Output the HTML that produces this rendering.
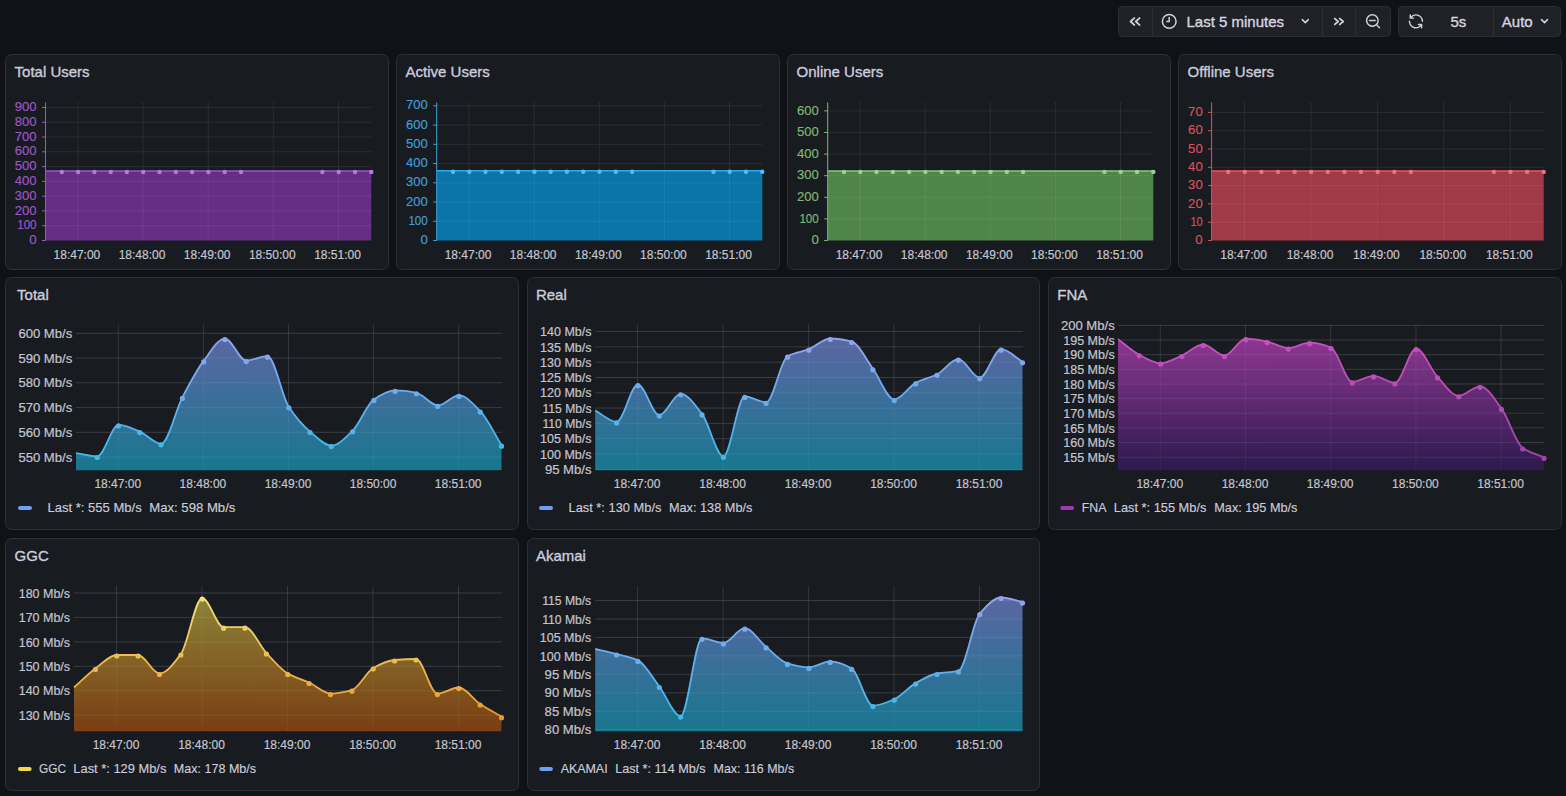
<!DOCTYPE html>
<html><head><meta charset="utf-8"><title>Dashboard</title>
<style>
html,body{margin:0;padding:0;background:#111217;width:1566px;height:796px;overflow:hidden;}
svg{display:block;font-family:"Liberation Sans", sans-serif;}
</style></head><body>
<svg width="1566" height="796" viewBox="0 0 1566 796">
<defs><linearGradient id="ltot" gradientUnits="userSpaceOnUse" x1="0" y1="339.6" x2="0" y2="457.5"><stop offset="0" stop-color="#8fa4f0"/><stop offset="1" stop-color="#40b8ea"/></linearGradient><linearGradient id="ftot" gradientUnits="userSpaceOnUse" x1="0" y1="339.6" x2="0" y2="470.2"><stop offset="0" stop-color="#5a67a2"/><stop offset="1" stop-color="#17778f"/></linearGradient><linearGradient id="lreal" gradientUnits="userSpaceOnUse" x1="0" y1="339.5" x2="0" y2="457.3"><stop offset="0" stop-color="#8fa4f0"/><stop offset="1" stop-color="#40b8ea"/></linearGradient><linearGradient id="freal" gradientUnits="userSpaceOnUse" x1="0" y1="339.5" x2="0" y2="470.2"><stop offset="0" stop-color="#5a67a2"/><stop offset="1" stop-color="#17778f"/></linearGradient><linearGradient id="lfna" gradientUnits="userSpaceOnUse" x1="0" y1="339.7" x2="0" y2="458.3"><stop offset="0" stop-color="#c652bc"/><stop offset="1" stop-color="#a244aa"/></linearGradient><linearGradient id="ffna" gradientUnits="userSpaceOnUse" x1="0" y1="339.7" x2="0" y2="470.2"><stop offset="0" stop-color="#8c3790"/><stop offset="1" stop-color="#2c1a4e"/></linearGradient><linearGradient id="lggc" gradientUnits="userSpaceOnUse" x1="0" y1="599.1" x2="0" y2="717.7"><stop offset="0" stop-color="#f2e27a"/><stop offset="1" stop-color="#e8982e"/></linearGradient><linearGradient id="fggc" gradientUnits="userSpaceOnUse" x1="0" y1="599.1" x2="0" y2="731.2"><stop offset="0" stop-color="#8c8238"/><stop offset="1" stop-color="#7a3e12"/></linearGradient><linearGradient id="lak" gradientUnits="userSpaceOnUse" x1="0" y1="598.5" x2="0" y2="717.1"><stop offset="0" stop-color="#8fa4f0"/><stop offset="1" stop-color="#40b8ea"/></linearGradient><linearGradient id="fak" gradientUnits="userSpaceOnUse" x1="0" y1="598.5" x2="0" y2="731.2"><stop offset="0" stop-color="#5a67a2"/><stop offset="1" stop-color="#17778f"/></linearGradient></defs>
<rect width="1566" height="796" fill="#111217"/>
<rect x="1118.5" y="6.5" width="272" height="30" rx="4" fill="#1f2126" stroke="#2c2e33"/><line x1="1152.5" y1="7" x2="1152.5" y2="36" stroke="#2c2e33"/><line x1="1322.5" y1="7" x2="1322.5" y2="36" stroke="#2c2e33"/><line x1="1355.5" y1="7" x2="1355.5" y2="36" stroke="#2c2e33"/><rect x="1398.5" y="6.5" width="162" height="30" rx="4" fill="#1f2126" stroke="#2c2e33"/><line x1="1493.5" y1="7" x2="1493.5" y2="36" stroke="#2c2e33"/><path d="M1134.3,18.1 l-3.7,3.4 l3.7,3.4 M1139.5,18.1 l-3.7,3.4 l3.7,3.4" fill="none" stroke="#d0d0dc" stroke-width="1.9" stroke-linecap="round" stroke-linejoin="round"/><path transform="translate(1160.1,12.3) scale(0.76)" fill="#d0d0dc" d="M12,2A10,10,0,1,0,22,12,10,10,0,0,0,12,2Zm0,18a8,8,0,1,1,8-8A8,8,0,0,1,12,20Zm0-14a1,1,0,0,0-1,1v4H9a1,1,0,0,0,0,2h3a1,1,0,0,0,1-1V7A1,1,0,0,0,12,6Z"/><text x="1186.5" y="27.4" font-size="15" fill="#d6d6e2" stroke="#d6d6e2" stroke-width="0.35">Last 5 minutes</text><path d="M1302.3,19.6 l3,3 l3,-3" fill="none" stroke="#d0d0dc" stroke-width="1.5" stroke-linecap="round" stroke-linejoin="round"/><path d="M1334.8,18.6 l3.4,2.9 l-3.4,2.9 M1339.8,18.6 l3.4,2.9 l-3.4,2.9" fill="none" stroke="#d0d0dc" stroke-width="1.9" stroke-linecap="round" stroke-linejoin="round"/><path transform="translate(1364.5,12.7) scale(0.715)" fill="#d0d0dc" d="M21.71,20.29,18,16.61A9,9,0,1,0,16.61,18l3.68,3.68a1,1,0,0,0,1.42,0A1,1,0,0,0,21.71,20.29ZM11,18a7,7,0,1,1,7-7A7,7,0,0,1,11,18Zm4-8H7a1,1,0,0,0,0,2h8a1,1,0,0,0,0-2Z"/><path transform="translate(1407.3,12.7) scale(0.72)" fill="#d0d0dc" d="M19.91,15.51H15.38a1,1,0,0,0,0,2h2.4A8,8,0,0,1,4,12a1,1,0,0,0-2,0,10,10,0,0,0,16.88,7.23V21a1,1,0,0,0,2,0V16.5A1,1,0,0,0,19.91,15.510ZM12,2A10,10,0,0,0,5.12,4.77V3a1,1,0,0,0-2,0V7.5a1,1,0,0,0,1,1h4.5a1,1,0,0,0,0-2H6.220A8,8,0,0,1,20,12a1,1,0,0,0,2,0A10,10,0,0,0,12,2Z"/><text x="1450.5" y="27.4" font-size="15" fill="#d6d6e2" stroke="#d6d6e2" stroke-width="0.35">5s</text><text x="1501.8" y="27.4" font-size="15" fill="#d6d6e2" stroke="#d6d6e2" stroke-width="0.35">Auto</text><path d="M1541.5,19.6 l3,3 l3,-3" fill="none" stroke="#d0d0dc" stroke-width="1.5" stroke-linecap="round" stroke-linejoin="round"/>
<rect x="5.5" y="54.5" width="383" height="215" rx="6" fill="#181b1f" stroke="#2c2f35"/>
<text x="14.6" y="76.9" font-size="15" fill="#ccccdc" stroke="#ccccdc" stroke-width="0.35">Total Users</text>
<line x1="42.0" y1="240.5" x2="45.5" y2="240.5" stroke="#9f55c9"/>
<text x="36.6" y="244.1" font-size="12" fill="#9f55c9" stroke="#9f55c9" stroke-width="0.15" text-anchor="end" textLength="7.4" lengthAdjust="spacingAndGlyphs">0</text>
<line x1="45.5" y1="225.7" x2="371.3" y2="225.7" stroke="#2a2d32"/>
<line x1="42.0" y1="225.7" x2="45.5" y2="225.7" stroke="#9f55c9"/>
<text x="36.6" y="229.3" font-size="12" fill="#9f55c9" stroke="#9f55c9" stroke-width="0.15" text-anchor="end" textLength="19.4" lengthAdjust="spacingAndGlyphs">100</text>
<line x1="45.5" y1="210.9" x2="371.3" y2="210.9" stroke="#2a2d32"/>
<line x1="42.0" y1="210.9" x2="45.5" y2="210.9" stroke="#9f55c9"/>
<text x="36.6" y="214.5" font-size="12" fill="#9f55c9" stroke="#9f55c9" stroke-width="0.15" text-anchor="end" textLength="21.8" lengthAdjust="spacingAndGlyphs">200</text>
<line x1="45.5" y1="196.2" x2="371.3" y2="196.2" stroke="#2a2d32"/>
<line x1="42.0" y1="196.2" x2="45.5" y2="196.2" stroke="#9f55c9"/>
<text x="36.6" y="199.8" font-size="12" fill="#9f55c9" stroke="#9f55c9" stroke-width="0.15" text-anchor="end" textLength="21.8" lengthAdjust="spacingAndGlyphs">300</text>
<line x1="45.5" y1="181.4" x2="371.3" y2="181.4" stroke="#2a2d32"/>
<line x1="42.0" y1="181.4" x2="45.5" y2="181.4" stroke="#9f55c9"/>
<text x="36.6" y="185.0" font-size="12" fill="#9f55c9" stroke="#9f55c9" stroke-width="0.15" text-anchor="end" textLength="21.8" lengthAdjust="spacingAndGlyphs">400</text>
<line x1="45.5" y1="166.6" x2="371.3" y2="166.6" stroke="#2a2d32"/>
<line x1="42.0" y1="166.6" x2="45.5" y2="166.6" stroke="#9f55c9"/>
<text x="36.6" y="170.2" font-size="12" fill="#9f55c9" stroke="#9f55c9" stroke-width="0.15" text-anchor="end" textLength="21.8" lengthAdjust="spacingAndGlyphs">500</text>
<line x1="45.5" y1="151.8" x2="371.3" y2="151.8" stroke="#2a2d32"/>
<line x1="42.0" y1="151.8" x2="45.5" y2="151.8" stroke="#9f55c9"/>
<text x="36.6" y="155.4" font-size="12" fill="#9f55c9" stroke="#9f55c9" stroke-width="0.15" text-anchor="end" textLength="21.8" lengthAdjust="spacingAndGlyphs">600</text>
<line x1="45.5" y1="137.0" x2="371.3" y2="137.0" stroke="#2a2d32"/>
<line x1="42.0" y1="137.0" x2="45.5" y2="137.0" stroke="#9f55c9"/>
<text x="36.6" y="140.6" font-size="12" fill="#9f55c9" stroke="#9f55c9" stroke-width="0.15" text-anchor="end" textLength="21.8" lengthAdjust="spacingAndGlyphs">700</text>
<line x1="45.5" y1="122.3" x2="371.3" y2="122.3" stroke="#2a2d32"/>
<line x1="42.0" y1="122.3" x2="45.5" y2="122.3" stroke="#9f55c9"/>
<text x="36.6" y="125.9" font-size="12" fill="#9f55c9" stroke="#9f55c9" stroke-width="0.15" text-anchor="end" textLength="21.8" lengthAdjust="spacingAndGlyphs">800</text>
<line x1="45.5" y1="107.5" x2="371.3" y2="107.5" stroke="#2a2d32"/>
<line x1="42.0" y1="107.5" x2="45.5" y2="107.5" stroke="#9f55c9"/>
<text x="36.6" y="111.1" font-size="12" fill="#9f55c9" stroke="#9f55c9" stroke-width="0.15" text-anchor="end" textLength="21.8" lengthAdjust="spacingAndGlyphs">900</text>
<line x1="77.9" y1="102" x2="77.9" y2="240.5" stroke="#2a2d32"/>
<line x1="143.0" y1="102" x2="143.0" y2="240.5" stroke="#2a2d32"/>
<line x1="208.2" y1="102" x2="208.2" y2="240.5" stroke="#2a2d32"/>
<line x1="273.3" y1="102" x2="273.3" y2="240.5" stroke="#2a2d32"/>
<line x1="338.5" y1="102" x2="338.5" y2="240.5" stroke="#2a2d32"/>
<rect x="45.5" y="171.0" width="325.8" height="69.5" fill="#672e86"/>
<line x1="45.5" y1="225.7" x2="371.3" y2="225.7" stroke="#ffffff" stroke-opacity="0.07"/>
<line x1="45.5" y1="210.9" x2="371.3" y2="210.9" stroke="#ffffff" stroke-opacity="0.07"/>
<line x1="45.5" y1="196.2" x2="371.3" y2="196.2" stroke="#ffffff" stroke-opacity="0.07"/>
<line x1="45.5" y1="181.4" x2="371.3" y2="181.4" stroke="#ffffff" stroke-opacity="0.07"/>
<line x1="77.9" y1="171.0" x2="77.9" y2="240.5" stroke="#ffffff" stroke-opacity="0.07"/>
<line x1="143.0" y1="171.0" x2="143.0" y2="240.5" stroke="#ffffff" stroke-opacity="0.07"/>
<line x1="208.2" y1="171.0" x2="208.2" y2="240.5" stroke="#ffffff" stroke-opacity="0.07"/>
<line x1="273.3" y1="171.0" x2="273.3" y2="240.5" stroke="#ffffff" stroke-opacity="0.07"/>
<line x1="338.5" y1="171.0" x2="338.5" y2="240.5" stroke="#ffffff" stroke-opacity="0.07"/>
<line x1="45.5" y1="171.0" x2="371.3" y2="171.0" stroke="#a055cc" stroke-width="1.5"/>
<line x1="45.5" y1="102.5" x2="45.5" y2="240.5" stroke="#9f55c9" stroke-width="1"/>
<circle cx="61.8" cy="172.0" r="2.2" fill="#b47ad9"/>
<circle cx="78.1" cy="172.0" r="2.2" fill="#b47ad9"/>
<circle cx="94.4" cy="172.0" r="2.2" fill="#b47ad9"/>
<circle cx="110.7" cy="172.0" r="2.2" fill="#b47ad9"/>
<circle cx="126.9" cy="172.0" r="2.2" fill="#b47ad9"/>
<circle cx="143.2" cy="172.0" r="2.2" fill="#b47ad9"/>
<circle cx="159.5" cy="172.0" r="2.2" fill="#b47ad9"/>
<circle cx="175.8" cy="172.0" r="2.2" fill="#b47ad9"/>
<circle cx="192.1" cy="172.0" r="2.2" fill="#b47ad9"/>
<circle cx="208.4" cy="172.0" r="2.2" fill="#b47ad9"/>
<circle cx="224.7" cy="172.0" r="2.2" fill="#b47ad9"/>
<circle cx="241.0" cy="172.0" r="2.2" fill="#b47ad9"/>
<circle cx="322.4" cy="172.0" r="2.2" fill="#b47ad9"/>
<circle cx="338.7" cy="172.0" r="2.2" fill="#b47ad9"/>
<circle cx="355.0" cy="172.0" r="2.2" fill="#b47ad9"/>
<circle cx="371.3" cy="172.0" r="2.2" fill="#b47ad9"/>
<text x="76.9" y="258.6" font-size="12" fill="#c4c4cf" stroke="#c4c4cf" stroke-width="0.2" text-anchor="middle">18:47:00</text>
<text x="142.0" y="258.6" font-size="12" fill="#c4c4cf" stroke="#c4c4cf" stroke-width="0.2" text-anchor="middle">18:48:00</text>
<text x="207.2" y="258.6" font-size="12" fill="#c4c4cf" stroke="#c4c4cf" stroke-width="0.2" text-anchor="middle">18:49:00</text>
<text x="272.3" y="258.6" font-size="12" fill="#c4c4cf" stroke="#c4c4cf" stroke-width="0.2" text-anchor="middle">18:50:00</text>
<text x="337.5" y="258.6" font-size="12" fill="#c4c4cf" stroke="#c4c4cf" stroke-width="0.2" text-anchor="middle">18:51:00</text>
<rect x="396.5" y="54.5" width="383" height="215" rx="6" fill="#181b1f" stroke="#2c2f35"/>
<text x="405.6" y="76.9" font-size="15" fill="#ccccdc" stroke="#ccccdc" stroke-width="0.35">Active Users</text>
<line x1="433.2" y1="240.5" x2="436.7" y2="240.5" stroke="#3f9fd8"/>
<text x="427.8" y="244.1" font-size="12" fill="#3f9fd8" stroke="#3f9fd8" stroke-width="0.15" text-anchor="end" textLength="7.4" lengthAdjust="spacingAndGlyphs">0</text>
<line x1="436.7" y1="221.3" x2="762.3" y2="221.3" stroke="#2a2d32"/>
<line x1="433.2" y1="221.3" x2="436.7" y2="221.3" stroke="#3f9fd8"/>
<text x="427.8" y="224.9" font-size="12" fill="#3f9fd8" stroke="#3f9fd8" stroke-width="0.15" text-anchor="end" textLength="19.4" lengthAdjust="spacingAndGlyphs">100</text>
<line x1="436.7" y1="202.0" x2="762.3" y2="202.0" stroke="#2a2d32"/>
<line x1="433.2" y1="202.0" x2="436.7" y2="202.0" stroke="#3f9fd8"/>
<text x="427.8" y="205.6" font-size="12" fill="#3f9fd8" stroke="#3f9fd8" stroke-width="0.15" text-anchor="end" textLength="21.8" lengthAdjust="spacingAndGlyphs">200</text>
<line x1="436.7" y1="182.8" x2="762.3" y2="182.8" stroke="#2a2d32"/>
<line x1="433.2" y1="182.8" x2="436.7" y2="182.8" stroke="#3f9fd8"/>
<text x="427.8" y="186.4" font-size="12" fill="#3f9fd8" stroke="#3f9fd8" stroke-width="0.15" text-anchor="end" textLength="21.8" lengthAdjust="spacingAndGlyphs">300</text>
<line x1="436.7" y1="163.5" x2="762.3" y2="163.5" stroke="#2a2d32"/>
<line x1="433.2" y1="163.5" x2="436.7" y2="163.5" stroke="#3f9fd8"/>
<text x="427.8" y="167.1" font-size="12" fill="#3f9fd8" stroke="#3f9fd8" stroke-width="0.15" text-anchor="end" textLength="21.8" lengthAdjust="spacingAndGlyphs">400</text>
<line x1="436.7" y1="144.3" x2="762.3" y2="144.3" stroke="#2a2d32"/>
<line x1="433.2" y1="144.3" x2="436.7" y2="144.3" stroke="#3f9fd8"/>
<text x="427.8" y="147.9" font-size="12" fill="#3f9fd8" stroke="#3f9fd8" stroke-width="0.15" text-anchor="end" textLength="21.8" lengthAdjust="spacingAndGlyphs">500</text>
<line x1="436.7" y1="125.1" x2="762.3" y2="125.1" stroke="#2a2d32"/>
<line x1="433.2" y1="125.1" x2="436.7" y2="125.1" stroke="#3f9fd8"/>
<text x="427.8" y="128.7" font-size="12" fill="#3f9fd8" stroke="#3f9fd8" stroke-width="0.15" text-anchor="end" textLength="21.8" lengthAdjust="spacingAndGlyphs">600</text>
<line x1="436.7" y1="105.8" x2="762.3" y2="105.8" stroke="#2a2d32"/>
<line x1="433.2" y1="105.8" x2="436.7" y2="105.8" stroke="#3f9fd8"/>
<text x="427.8" y="109.4" font-size="12" fill="#3f9fd8" stroke="#3f9fd8" stroke-width="0.15" text-anchor="end" textLength="21.8" lengthAdjust="spacingAndGlyphs">700</text>
<line x1="469.0" y1="102" x2="469.0" y2="240.5" stroke="#2a2d32"/>
<line x1="534.2" y1="102" x2="534.2" y2="240.5" stroke="#2a2d32"/>
<line x1="599.3" y1="102" x2="599.3" y2="240.5" stroke="#2a2d32"/>
<line x1="664.4" y1="102" x2="664.4" y2="240.5" stroke="#2a2d32"/>
<line x1="729.5" y1="102" x2="729.5" y2="240.5" stroke="#2a2d32"/>
<rect x="436.7" y="170.8" width="325.6" height="69.7" fill="#0b74a9"/>
<line x1="436.7" y1="221.3" x2="762.3" y2="221.3" stroke="#ffffff" stroke-opacity="0.07"/>
<line x1="436.7" y1="202.0" x2="762.3" y2="202.0" stroke="#ffffff" stroke-opacity="0.07"/>
<line x1="436.7" y1="182.8" x2="762.3" y2="182.8" stroke="#ffffff" stroke-opacity="0.07"/>
<line x1="469.0" y1="170.8" x2="469.0" y2="240.5" stroke="#ffffff" stroke-opacity="0.07"/>
<line x1="534.2" y1="170.8" x2="534.2" y2="240.5" stroke="#ffffff" stroke-opacity="0.07"/>
<line x1="599.3" y1="170.8" x2="599.3" y2="240.5" stroke="#ffffff" stroke-opacity="0.07"/>
<line x1="664.4" y1="170.8" x2="664.4" y2="240.5" stroke="#ffffff" stroke-opacity="0.07"/>
<line x1="729.5" y1="170.8" x2="729.5" y2="240.5" stroke="#ffffff" stroke-opacity="0.07"/>
<line x1="436.7" y1="170.8" x2="762.3" y2="170.8" stroke="#2eaaf0" stroke-width="1.5"/>
<line x1="436.7" y1="102.5" x2="436.7" y2="240.5" stroke="#3f9fd8" stroke-width="1"/>
<circle cx="453.0" cy="171.8" r="2.2" fill="#52bcf5"/>
<circle cx="469.3" cy="171.8" r="2.2" fill="#52bcf5"/>
<circle cx="485.5" cy="171.8" r="2.2" fill="#52bcf5"/>
<circle cx="501.8" cy="171.8" r="2.2" fill="#52bcf5"/>
<circle cx="518.1" cy="171.8" r="2.2" fill="#52bcf5"/>
<circle cx="534.4" cy="171.8" r="2.2" fill="#52bcf5"/>
<circle cx="550.7" cy="171.8" r="2.2" fill="#52bcf5"/>
<circle cx="566.9" cy="171.8" r="2.2" fill="#52bcf5"/>
<circle cx="583.2" cy="171.8" r="2.2" fill="#52bcf5"/>
<circle cx="599.5" cy="171.8" r="2.2" fill="#52bcf5"/>
<circle cx="615.8" cy="171.8" r="2.2" fill="#52bcf5"/>
<circle cx="632.1" cy="171.8" r="2.2" fill="#52bcf5"/>
<circle cx="713.5" cy="171.8" r="2.2" fill="#52bcf5"/>
<circle cx="729.7" cy="171.8" r="2.2" fill="#52bcf5"/>
<circle cx="746.0" cy="171.8" r="2.2" fill="#52bcf5"/>
<circle cx="762.3" cy="171.8" r="2.2" fill="#52bcf5"/>
<text x="468.0" y="258.6" font-size="12" fill="#c4c4cf" stroke="#c4c4cf" stroke-width="0.2" text-anchor="middle">18:47:00</text>
<text x="533.2" y="258.6" font-size="12" fill="#c4c4cf" stroke="#c4c4cf" stroke-width="0.2" text-anchor="middle">18:48:00</text>
<text x="598.3" y="258.6" font-size="12" fill="#c4c4cf" stroke="#c4c4cf" stroke-width="0.2" text-anchor="middle">18:49:00</text>
<text x="663.4" y="258.6" font-size="12" fill="#c4c4cf" stroke="#c4c4cf" stroke-width="0.2" text-anchor="middle">18:50:00</text>
<text x="728.5" y="258.6" font-size="12" fill="#c4c4cf" stroke="#c4c4cf" stroke-width="0.2" text-anchor="middle">18:51:00</text>
<rect x="787.5" y="54.5" width="383" height="215" rx="6" fill="#181b1f" stroke="#2c2f35"/>
<text x="796.6" y="76.9" font-size="15" fill="#ccccdc" stroke="#ccccdc" stroke-width="0.35">Online Users</text>
<line x1="824.2" y1="240.5" x2="827.7" y2="240.5" stroke="#80b874"/>
<text x="818.8000000000001" y="244.1" font-size="12" fill="#80b874" stroke="#80b874" stroke-width="0.15" text-anchor="end" textLength="7.4" lengthAdjust="spacingAndGlyphs">0</text>
<line x1="827.7" y1="218.9" x2="1153.3" y2="218.9" stroke="#2a2d32"/>
<line x1="824.2" y1="218.9" x2="827.7" y2="218.9" stroke="#80b874"/>
<text x="818.8000000000001" y="222.5" font-size="12" fill="#80b874" stroke="#80b874" stroke-width="0.15" text-anchor="end" textLength="19.4" lengthAdjust="spacingAndGlyphs">100</text>
<line x1="827.7" y1="197.3" x2="1153.3" y2="197.3" stroke="#2a2d32"/>
<line x1="824.2" y1="197.3" x2="827.7" y2="197.3" stroke="#80b874"/>
<text x="818.8000000000001" y="200.9" font-size="12" fill="#80b874" stroke="#80b874" stroke-width="0.15" text-anchor="end" textLength="21.8" lengthAdjust="spacingAndGlyphs">200</text>
<line x1="827.7" y1="175.7" x2="1153.3" y2="175.7" stroke="#2a2d32"/>
<line x1="824.2" y1="175.7" x2="827.7" y2="175.7" stroke="#80b874"/>
<text x="818.8000000000001" y="179.3" font-size="12" fill="#80b874" stroke="#80b874" stroke-width="0.15" text-anchor="end" textLength="21.8" lengthAdjust="spacingAndGlyphs">300</text>
<line x1="827.7" y1="154.1" x2="1153.3" y2="154.1" stroke="#2a2d32"/>
<line x1="824.2" y1="154.1" x2="827.7" y2="154.1" stroke="#80b874"/>
<text x="818.8000000000001" y="157.7" font-size="12" fill="#80b874" stroke="#80b874" stroke-width="0.15" text-anchor="end" textLength="21.8" lengthAdjust="spacingAndGlyphs">400</text>
<line x1="827.7" y1="132.5" x2="1153.3" y2="132.5" stroke="#2a2d32"/>
<line x1="824.2" y1="132.5" x2="827.7" y2="132.5" stroke="#80b874"/>
<text x="818.8000000000001" y="136.1" font-size="12" fill="#80b874" stroke="#80b874" stroke-width="0.15" text-anchor="end" textLength="21.8" lengthAdjust="spacingAndGlyphs">500</text>
<line x1="827.7" y1="110.9" x2="1153.3" y2="110.9" stroke="#2a2d32"/>
<line x1="824.2" y1="110.9" x2="827.7" y2="110.9" stroke="#80b874"/>
<text x="818.8000000000001" y="114.5" font-size="12" fill="#80b874" stroke="#80b874" stroke-width="0.15" text-anchor="end" textLength="21.8" lengthAdjust="spacingAndGlyphs">600</text>
<line x1="860.0" y1="102" x2="860.0" y2="240.5" stroke="#2a2d32"/>
<line x1="925.2" y1="102" x2="925.2" y2="240.5" stroke="#2a2d32"/>
<line x1="990.3" y1="102" x2="990.3" y2="240.5" stroke="#2a2d32"/>
<line x1="1055.4" y1="102" x2="1055.4" y2="240.5" stroke="#2a2d32"/>
<line x1="1120.5" y1="102" x2="1120.5" y2="240.5" stroke="#2a2d32"/>
<rect x="827.7" y="170.9" width="325.6" height="69.6" fill="#4f8549"/>
<line x1="827.7" y1="218.9" x2="1153.3" y2="218.9" stroke="#ffffff" stroke-opacity="0.07"/>
<line x1="827.7" y1="197.3" x2="1153.3" y2="197.3" stroke="#ffffff" stroke-opacity="0.07"/>
<line x1="827.7" y1="175.7" x2="1153.3" y2="175.7" stroke="#ffffff" stroke-opacity="0.07"/>
<line x1="860.0" y1="170.9" x2="860.0" y2="240.5" stroke="#ffffff" stroke-opacity="0.07"/>
<line x1="925.2" y1="170.9" x2="925.2" y2="240.5" stroke="#ffffff" stroke-opacity="0.07"/>
<line x1="990.3" y1="170.9" x2="990.3" y2="240.5" stroke="#ffffff" stroke-opacity="0.07"/>
<line x1="1055.4" y1="170.9" x2="1055.4" y2="240.5" stroke="#ffffff" stroke-opacity="0.07"/>
<line x1="1120.5" y1="170.9" x2="1120.5" y2="240.5" stroke="#ffffff" stroke-opacity="0.07"/>
<line x1="827.7" y1="170.9" x2="1153.3" y2="170.9" stroke="#86c97d" stroke-width="1.5"/>
<line x1="827.7" y1="102.5" x2="827.7" y2="240.5" stroke="#80b874" stroke-width="1"/>
<circle cx="844.0" cy="171.9" r="2.2" fill="#9ad490"/>
<circle cx="860.3" cy="171.9" r="2.2" fill="#9ad490"/>
<circle cx="876.5" cy="171.9" r="2.2" fill="#9ad490"/>
<circle cx="892.8" cy="171.9" r="2.2" fill="#9ad490"/>
<circle cx="909.1" cy="171.9" r="2.2" fill="#9ad490"/>
<circle cx="925.4" cy="171.9" r="2.2" fill="#9ad490"/>
<circle cx="941.7" cy="171.9" r="2.2" fill="#9ad490"/>
<circle cx="957.9" cy="171.9" r="2.2" fill="#9ad490"/>
<circle cx="974.2" cy="171.9" r="2.2" fill="#9ad490"/>
<circle cx="990.5" cy="171.9" r="2.2" fill="#9ad490"/>
<circle cx="1006.8" cy="171.9" r="2.2" fill="#9ad490"/>
<circle cx="1023.1" cy="171.9" r="2.2" fill="#9ad490"/>
<circle cx="1104.5" cy="171.9" r="2.2" fill="#9ad490"/>
<circle cx="1120.7" cy="171.9" r="2.2" fill="#9ad490"/>
<circle cx="1137.0" cy="171.9" r="2.2" fill="#9ad490"/>
<circle cx="1153.3" cy="171.9" r="2.2" fill="#9ad490"/>
<text x="859.0" y="258.6" font-size="12" fill="#c4c4cf" stroke="#c4c4cf" stroke-width="0.2" text-anchor="middle">18:47:00</text>
<text x="924.2" y="258.6" font-size="12" fill="#c4c4cf" stroke="#c4c4cf" stroke-width="0.2" text-anchor="middle">18:48:00</text>
<text x="989.3" y="258.6" font-size="12" fill="#c4c4cf" stroke="#c4c4cf" stroke-width="0.2" text-anchor="middle">18:49:00</text>
<text x="1054.4" y="258.6" font-size="12" fill="#c4c4cf" stroke="#c4c4cf" stroke-width="0.2" text-anchor="middle">18:50:00</text>
<text x="1119.5" y="258.6" font-size="12" fill="#c4c4cf" stroke="#c4c4cf" stroke-width="0.2" text-anchor="middle">18:51:00</text>
<rect x="1178.5" y="54.5" width="383" height="215" rx="6" fill="#181b1f" stroke="#2c2f35"/>
<text x="1187.6" y="76.9" font-size="15" fill="#ccccdc" stroke="#ccccdc" stroke-width="0.35">Offline Users</text>
<line x1="1208.1" y1="240.5" x2="1211.6" y2="240.5" stroke="#d8525f"/>
<text x="1202.6999999999998" y="244.1" font-size="12" fill="#d8525f" stroke="#d8525f" stroke-width="0.15" text-anchor="end" textLength="7.4" lengthAdjust="spacingAndGlyphs">0</text>
<line x1="1211.6" y1="222.2" x2="1543.7" y2="222.2" stroke="#2a2d32"/>
<line x1="1208.1" y1="222.2" x2="1211.6" y2="222.2" stroke="#d8525f"/>
<text x="1202.6999999999998" y="225.8" font-size="12" fill="#d8525f" stroke="#d8525f" stroke-width="0.15" text-anchor="end" textLength="12.2" lengthAdjust="spacingAndGlyphs">10</text>
<line x1="1211.6" y1="203.9" x2="1543.7" y2="203.9" stroke="#2a2d32"/>
<line x1="1208.1" y1="203.9" x2="1211.6" y2="203.9" stroke="#d8525f"/>
<text x="1202.6999999999998" y="207.5" font-size="12" fill="#d8525f" stroke="#d8525f" stroke-width="0.15" text-anchor="end" textLength="14.6" lengthAdjust="spacingAndGlyphs">20</text>
<line x1="1211.6" y1="185.6" x2="1543.7" y2="185.6" stroke="#2a2d32"/>
<line x1="1208.1" y1="185.6" x2="1211.6" y2="185.6" stroke="#d8525f"/>
<text x="1202.6999999999998" y="189.2" font-size="12" fill="#d8525f" stroke="#d8525f" stroke-width="0.15" text-anchor="end" textLength="14.6" lengthAdjust="spacingAndGlyphs">30</text>
<line x1="1211.6" y1="167.3" x2="1543.7" y2="167.3" stroke="#2a2d32"/>
<line x1="1208.1" y1="167.3" x2="1211.6" y2="167.3" stroke="#d8525f"/>
<text x="1202.6999999999998" y="170.9" font-size="12" fill="#d8525f" stroke="#d8525f" stroke-width="0.15" text-anchor="end" textLength="14.6" lengthAdjust="spacingAndGlyphs">40</text>
<line x1="1211.6" y1="149.0" x2="1543.7" y2="149.0" stroke="#2a2d32"/>
<line x1="1208.1" y1="149.0" x2="1211.6" y2="149.0" stroke="#d8525f"/>
<text x="1202.6999999999998" y="152.6" font-size="12" fill="#d8525f" stroke="#d8525f" stroke-width="0.15" text-anchor="end" textLength="14.6" lengthAdjust="spacingAndGlyphs">50</text>
<line x1="1211.6" y1="130.7" x2="1543.7" y2="130.7" stroke="#2a2d32"/>
<line x1="1208.1" y1="130.7" x2="1211.6" y2="130.7" stroke="#d8525f"/>
<text x="1202.6999999999998" y="134.3" font-size="12" fill="#d8525f" stroke="#d8525f" stroke-width="0.15" text-anchor="end" textLength="14.6" lengthAdjust="spacingAndGlyphs">60</text>
<line x1="1211.6" y1="112.4" x2="1543.7" y2="112.4" stroke="#2a2d32"/>
<line x1="1208.1" y1="112.4" x2="1211.6" y2="112.4" stroke="#d8525f"/>
<text x="1202.6999999999998" y="116.0" font-size="12" fill="#d8525f" stroke="#d8525f" stroke-width="0.15" text-anchor="end" textLength="14.6" lengthAdjust="spacingAndGlyphs">70</text>
<line x1="1244.6" y1="102" x2="1244.6" y2="240.5" stroke="#2a2d32"/>
<line x1="1311.0" y1="102" x2="1311.0" y2="240.5" stroke="#2a2d32"/>
<line x1="1377.4" y1="102" x2="1377.4" y2="240.5" stroke="#2a2d32"/>
<line x1="1443.8" y1="102" x2="1443.8" y2="240.5" stroke="#2a2d32"/>
<line x1="1510.3" y1="102" x2="1510.3" y2="240.5" stroke="#2a2d32"/>
<rect x="1211.6" y="170.9" width="332.1" height="69.6" fill="#a13a47"/>
<line x1="1211.6" y1="222.2" x2="1543.7" y2="222.2" stroke="#ffffff" stroke-opacity="0.07"/>
<line x1="1211.6" y1="203.9" x2="1543.7" y2="203.9" stroke="#ffffff" stroke-opacity="0.07"/>
<line x1="1211.6" y1="185.6" x2="1543.7" y2="185.6" stroke="#ffffff" stroke-opacity="0.07"/>
<line x1="1244.6" y1="170.9" x2="1244.6" y2="240.5" stroke="#ffffff" stroke-opacity="0.07"/>
<line x1="1311.0" y1="170.9" x2="1311.0" y2="240.5" stroke="#ffffff" stroke-opacity="0.07"/>
<line x1="1377.4" y1="170.9" x2="1377.4" y2="240.5" stroke="#ffffff" stroke-opacity="0.07"/>
<line x1="1443.8" y1="170.9" x2="1443.8" y2="240.5" stroke="#ffffff" stroke-opacity="0.07"/>
<line x1="1510.3" y1="170.9" x2="1510.3" y2="240.5" stroke="#ffffff" stroke-opacity="0.07"/>
<line x1="1211.6" y1="170.9" x2="1543.7" y2="170.9" stroke="#e85565" stroke-width="1.5"/>
<line x1="1211.6" y1="102.5" x2="1211.6" y2="240.5" stroke="#d8525f" stroke-width="1"/>
<circle cx="1228.2" cy="171.9" r="2.2" fill="#f07080"/>
<circle cx="1244.8" cy="171.9" r="2.2" fill="#f07080"/>
<circle cx="1261.4" cy="171.9" r="2.2" fill="#f07080"/>
<circle cx="1278.0" cy="171.9" r="2.2" fill="#f07080"/>
<circle cx="1294.6" cy="171.9" r="2.2" fill="#f07080"/>
<circle cx="1311.2" cy="171.9" r="2.2" fill="#f07080"/>
<circle cx="1327.8" cy="171.9" r="2.2" fill="#f07080"/>
<circle cx="1344.4" cy="171.9" r="2.2" fill="#f07080"/>
<circle cx="1361.0" cy="171.9" r="2.2" fill="#f07080"/>
<circle cx="1377.7" cy="171.9" r="2.2" fill="#f07080"/>
<circle cx="1394.3" cy="171.9" r="2.2" fill="#f07080"/>
<circle cx="1410.9" cy="171.9" r="2.2" fill="#f07080"/>
<circle cx="1493.9" cy="171.9" r="2.2" fill="#f07080"/>
<circle cx="1510.5" cy="171.9" r="2.2" fill="#f07080"/>
<circle cx="1527.1" cy="171.9" r="2.2" fill="#f07080"/>
<circle cx="1543.7" cy="171.9" r="2.2" fill="#f07080"/>
<text x="1243.6" y="258.6" font-size="12" fill="#c4c4cf" stroke="#c4c4cf" stroke-width="0.2" text-anchor="middle">18:47:00</text>
<text x="1310.0" y="258.6" font-size="12" fill="#c4c4cf" stroke="#c4c4cf" stroke-width="0.2" text-anchor="middle">18:48:00</text>
<text x="1376.4" y="258.6" font-size="12" fill="#c4c4cf" stroke="#c4c4cf" stroke-width="0.2" text-anchor="middle">18:49:00</text>
<text x="1442.8" y="258.6" font-size="12" fill="#c4c4cf" stroke="#c4c4cf" stroke-width="0.2" text-anchor="middle">18:50:00</text>
<text x="1509.3" y="258.6" font-size="12" fill="#c4c4cf" stroke="#c4c4cf" stroke-width="0.2" text-anchor="middle">18:51:00</text>
<rect x="5.5" y="277.5" width="513" height="252" rx="6" fill="#181b1f" stroke="#2c2f35"/>
<text x="17.1" y="299.9" font-size="15" fill="#ccccdc" stroke="#ccccdc" stroke-width="0.35">Total</text>
<line x1="76" y1="333.3" x2="502.5" y2="333.3" stroke="#2a2d32"/>
<text x="72.2" y="337.9" font-size="12" fill="#c4c4cf" stroke="#c4c4cf" stroke-width="0.2" text-anchor="end" textLength="53.8" lengthAdjust="spacingAndGlyphs">600 Mb/s</text>
<line x1="76" y1="358.1" x2="502.5" y2="358.1" stroke="#2a2d32"/>
<text x="72.2" y="362.7" font-size="12" fill="#c4c4cf" stroke="#c4c4cf" stroke-width="0.2" text-anchor="end" textLength="53.8" lengthAdjust="spacingAndGlyphs">590 Mb/s</text>
<line x1="76" y1="382.8" x2="502.5" y2="382.8" stroke="#2a2d32"/>
<text x="72.2" y="387.4" font-size="12" fill="#c4c4cf" stroke="#c4c4cf" stroke-width="0.2" text-anchor="end" textLength="53.8" lengthAdjust="spacingAndGlyphs">580 Mb/s</text>
<line x1="76" y1="407.6" x2="502.5" y2="407.6" stroke="#2a2d32"/>
<text x="72.2" y="412.2" font-size="12" fill="#c4c4cf" stroke="#c4c4cf" stroke-width="0.2" text-anchor="end" textLength="53.8" lengthAdjust="spacingAndGlyphs">570 Mb/s</text>
<line x1="76" y1="432.3" x2="502.5" y2="432.3" stroke="#2a2d32"/>
<text x="72.2" y="436.9" font-size="12" fill="#c4c4cf" stroke="#c4c4cf" stroke-width="0.2" text-anchor="end" textLength="53.8" lengthAdjust="spacingAndGlyphs">560 Mb/s</text>
<line x1="76" y1="457.1" x2="502.5" y2="457.1" stroke="#2a2d32"/>
<text x="72.2" y="461.7" font-size="12" fill="#c4c4cf" stroke="#c4c4cf" stroke-width="0.2" text-anchor="end" textLength="53.8" lengthAdjust="spacingAndGlyphs">550 Mb/s</text>
<line x1="118.3" y1="324.5" x2="118.3" y2="470.2" stroke="#2a2d32"/>
<line x1="203.4" y1="324.5" x2="203.4" y2="470.2" stroke="#2a2d32"/>
<line x1="288.5" y1="324.5" x2="288.5" y2="470.2" stroke="#2a2d32"/>
<line x1="373.6" y1="324.5" x2="373.6" y2="470.2" stroke="#2a2d32"/>
<line x1="458.7" y1="324.5" x2="458.7" y2="470.2" stroke="#2a2d32"/>
<path d="M76.00,453.10 C83.09,454.23 90.18,456.50 97.28,456.50 C104.37,456.50 111.46,424.90 118.55,424.90 C125.64,424.90 132.73,428.72 139.82,431.60 C146.92,434.48 154.01,443.80 161.10,443.80 C168.19,443.80 175.28,411.02 182.38,397.40 C189.47,383.78 196.56,370.13 203.65,360.90 C210.74,351.67 217.83,338.60 224.93,338.60 C232.02,338.60 239.11,360.60 246.20,360.60 C253.29,360.60 260.38,356.20 267.48,356.20 C274.57,356.20 281.66,395.70 288.75,406.80 C295.84,417.90 302.93,425.63 310.02,431.60 C317.12,437.57 324.21,445.60 331.30,445.60 C338.39,445.60 345.48,437.51 352.57,430.80 C359.67,424.09 366.76,404.06 373.85,399.40 C380.94,394.74 388.03,390.40 395.12,390.40 C402.22,390.40 409.31,391.46 416.40,392.80 C423.49,394.14 430.58,405.40 437.68,405.40 C444.77,405.40 451.86,395.40 458.95,395.40 C466.04,395.40 473.13,403.93 480.23,411.10 C487.32,418.27 494.41,433.83 501.50,445.20 L501.50,470.2 L76.00,470.2 Z" fill="url(#ftot)"/>
<line x1="76" y1="333.3" x2="501.5" y2="333.3" stroke="#ffffff" stroke-opacity="0.08"/>
<line x1="76" y1="358.1" x2="501.5" y2="358.1" stroke="#ffffff" stroke-opacity="0.08"/>
<line x1="76" y1="382.8" x2="501.5" y2="382.8" stroke="#ffffff" stroke-opacity="0.08"/>
<line x1="76" y1="407.6" x2="501.5" y2="407.6" stroke="#ffffff" stroke-opacity="0.08"/>
<line x1="76" y1="432.3" x2="501.5" y2="432.3" stroke="#ffffff" stroke-opacity="0.08"/>
<line x1="76" y1="457.1" x2="501.5" y2="457.1" stroke="#ffffff" stroke-opacity="0.08"/>
<line x1="118.3" y1="324.5" x2="118.3" y2="470.2" stroke="#ffffff" stroke-opacity="0.05"/>
<line x1="203.4" y1="324.5" x2="203.4" y2="470.2" stroke="#ffffff" stroke-opacity="0.05"/>
<line x1="288.5" y1="324.5" x2="288.5" y2="470.2" stroke="#ffffff" stroke-opacity="0.05"/>
<line x1="373.6" y1="324.5" x2="373.6" y2="470.2" stroke="#ffffff" stroke-opacity="0.05"/>
<line x1="458.7" y1="324.5" x2="458.7" y2="470.2" stroke="#ffffff" stroke-opacity="0.05"/>
<path d="M76.00,453.10 C83.09,454.23 90.18,456.50 97.28,456.50 C104.37,456.50 111.46,424.90 118.55,424.90 C125.64,424.90 132.73,428.72 139.82,431.60 C146.92,434.48 154.01,443.80 161.10,443.80 C168.19,443.80 175.28,411.02 182.38,397.40 C189.47,383.78 196.56,370.13 203.65,360.90 C210.74,351.67 217.83,338.60 224.93,338.60 C232.02,338.60 239.11,360.60 246.20,360.60 C253.29,360.60 260.38,356.20 267.48,356.20 C274.57,356.20 281.66,395.70 288.75,406.80 C295.84,417.90 302.93,425.63 310.02,431.60 C317.12,437.57 324.21,445.60 331.30,445.60 C338.39,445.60 345.48,437.51 352.57,430.80 C359.67,424.09 366.76,404.06 373.85,399.40 C380.94,394.74 388.03,390.40 395.12,390.40 C402.22,390.40 409.31,391.46 416.40,392.80 C423.49,394.14 430.58,405.40 437.68,405.40 C444.77,405.40 451.86,395.40 458.95,395.40 C466.04,395.40 473.13,403.93 480.23,411.10 C487.32,418.27 494.41,433.83 501.50,445.20" fill="none" stroke="url(#ltot)" stroke-width="1.8"/>
<circle cx="97.3" cy="457.5" r="2.6" fill="url(#ltot)"/>
<circle cx="118.5" cy="425.9" r="2.6" fill="url(#ltot)"/>
<circle cx="139.8" cy="432.6" r="2.6" fill="url(#ltot)"/>
<circle cx="161.1" cy="444.8" r="2.6" fill="url(#ltot)"/>
<circle cx="182.4" cy="398.4" r="2.6" fill="url(#ltot)"/>
<circle cx="203.7" cy="361.9" r="2.6" fill="url(#ltot)"/>
<circle cx="224.9" cy="339.6" r="2.6" fill="url(#ltot)"/>
<circle cx="246.2" cy="361.6" r="2.6" fill="url(#ltot)"/>
<circle cx="267.5" cy="357.2" r="2.6" fill="url(#ltot)"/>
<circle cx="288.8" cy="407.8" r="2.6" fill="url(#ltot)"/>
<circle cx="310.0" cy="432.6" r="2.6" fill="url(#ltot)"/>
<circle cx="331.3" cy="446.6" r="2.6" fill="url(#ltot)"/>
<circle cx="352.6" cy="431.8" r="2.6" fill="url(#ltot)"/>
<circle cx="373.9" cy="400.4" r="2.6" fill="url(#ltot)"/>
<circle cx="395.1" cy="391.4" r="2.6" fill="url(#ltot)"/>
<circle cx="416.4" cy="393.8" r="2.6" fill="url(#ltot)"/>
<circle cx="437.7" cy="406.4" r="2.6" fill="url(#ltot)"/>
<circle cx="458.9" cy="396.4" r="2.6" fill="url(#ltot)"/>
<circle cx="480.2" cy="412.1" r="2.6" fill="url(#ltot)"/>
<circle cx="501.5" cy="446.2" r="2.6" fill="url(#ltot)"/>
<text x="117.8" y="488.2" font-size="12" fill="#c4c4cf" stroke="#c4c4cf" stroke-width="0.2" text-anchor="middle">18:47:00</text>
<text x="202.9" y="488.2" font-size="12" fill="#c4c4cf" stroke="#c4c4cf" stroke-width="0.2" text-anchor="middle">18:48:00</text>
<text x="288.0" y="488.2" font-size="12" fill="#c4c4cf" stroke="#c4c4cf" stroke-width="0.2" text-anchor="middle">18:49:00</text>
<text x="373.1" y="488.2" font-size="12" fill="#c4c4cf" stroke="#c4c4cf" stroke-width="0.2" text-anchor="middle">18:50:00</text>
<text x="458.2" y="488.2" font-size="12" fill="#c4c4cf" stroke="#c4c4cf" stroke-width="0.2" text-anchor="middle">18:51:00</text>
<rect x="18" y="506" width="14" height="4" rx="2" fill="#6e9ff5"/>
<text x="47.4" y="512" font-size="13" fill="#ccccdc" stroke="#ccccdc" stroke-width="0.15" textLength="94.3" lengthAdjust="spacingAndGlyphs">Last *: 555 Mb/s</text>
<text x="149.2" y="512" font-size="13" fill="#ccccdc" stroke="#ccccdc" stroke-width="0.15" textLength="86.2" lengthAdjust="spacingAndGlyphs">Max: 598 Mb/s</text>
<rect x="527.5" y="277.5" width="512" height="252" rx="6" fill="#181b1f" stroke="#2c2f35"/>
<text x="535.9" y="299.9" font-size="15" fill="#ccccdc" stroke="#ccccdc" stroke-width="0.35">Real</text>
<line x1="595.2" y1="331.6" x2="1023.5" y2="331.6" stroke="#2a2d32"/>
<text x="591.5" y="336.2" font-size="12" fill="#c4c4cf" stroke="#c4c4cf" stroke-width="0.2" text-anchor="end" textLength="51.4" lengthAdjust="spacingAndGlyphs">140 Mb/s</text>
<line x1="595.2" y1="346.9" x2="1023.5" y2="346.9" stroke="#2a2d32"/>
<text x="591.5" y="351.5" font-size="12" fill="#c4c4cf" stroke="#c4c4cf" stroke-width="0.2" text-anchor="end" textLength="51.4" lengthAdjust="spacingAndGlyphs">135 Mb/s</text>
<line x1="595.2" y1="362.2" x2="1023.5" y2="362.2" stroke="#2a2d32"/>
<text x="591.5" y="366.8" font-size="12" fill="#c4c4cf" stroke="#c4c4cf" stroke-width="0.2" text-anchor="end" textLength="51.4" lengthAdjust="spacingAndGlyphs">130 Mb/s</text>
<line x1="595.2" y1="377.5" x2="1023.5" y2="377.5" stroke="#2a2d32"/>
<text x="591.5" y="382.1" font-size="12" fill="#c4c4cf" stroke="#c4c4cf" stroke-width="0.2" text-anchor="end" textLength="51.4" lengthAdjust="spacingAndGlyphs">125 Mb/s</text>
<line x1="595.2" y1="392.8" x2="1023.5" y2="392.8" stroke="#2a2d32"/>
<text x="591.5" y="397.4" font-size="12" fill="#c4c4cf" stroke="#c4c4cf" stroke-width="0.2" text-anchor="end" textLength="51.4" lengthAdjust="spacingAndGlyphs">120 Mb/s</text>
<line x1="595.2" y1="408.1" x2="1023.5" y2="408.1" stroke="#2a2d32"/>
<text x="591.5" y="412.7" font-size="12" fill="#c4c4cf" stroke="#c4c4cf" stroke-width="0.2" text-anchor="end" textLength="49.0" lengthAdjust="spacingAndGlyphs">115 Mb/s</text>
<line x1="595.2" y1="423.4" x2="1023.5" y2="423.4" stroke="#2a2d32"/>
<text x="591.5" y="428.0" font-size="12" fill="#c4c4cf" stroke="#c4c4cf" stroke-width="0.2" text-anchor="end" textLength="49.0" lengthAdjust="spacingAndGlyphs">110 Mb/s</text>
<line x1="595.2" y1="438.7" x2="1023.5" y2="438.7" stroke="#2a2d32"/>
<text x="591.5" y="443.3" font-size="12" fill="#c4c4cf" stroke="#c4c4cf" stroke-width="0.2" text-anchor="end" textLength="51.4" lengthAdjust="spacingAndGlyphs">105 Mb/s</text>
<line x1="595.2" y1="454.0" x2="1023.5" y2="454.0" stroke="#2a2d32"/>
<text x="591.5" y="458.6" font-size="12" fill="#c4c4cf" stroke="#c4c4cf" stroke-width="0.2" text-anchor="end" textLength="51.4" lengthAdjust="spacingAndGlyphs">100 Mb/s</text>
<line x1="595.2" y1="469.3" x2="1023.5" y2="469.3" stroke="#2a2d32"/>
<text x="591.5" y="473.9" font-size="12" fill="#c4c4cf" stroke="#c4c4cf" stroke-width="0.2" text-anchor="end" textLength="46.6" lengthAdjust="spacingAndGlyphs">95 Mb/s</text>
<line x1="637.6" y1="324.5" x2="637.6" y2="470.2" stroke="#2a2d32"/>
<line x1="723.1" y1="324.5" x2="723.1" y2="470.2" stroke="#2a2d32"/>
<line x1="808.6" y1="324.5" x2="808.6" y2="470.2" stroke="#2a2d32"/>
<line x1="894.0" y1="324.5" x2="894.0" y2="470.2" stroke="#2a2d32"/>
<line x1="979.5" y1="324.5" x2="979.5" y2="470.2" stroke="#2a2d32"/>
<path d="M595.20,410.50 C602.32,414.30 609.44,421.90 616.57,421.90 C623.69,421.90 630.81,384.70 637.93,384.70 C645.05,384.70 652.17,415.10 659.30,415.10 C666.42,415.10 673.54,393.80 680.66,393.80 C687.78,393.80 694.90,404.81 702.03,413.90 C709.15,422.99 716.27,456.30 723.39,456.30 C730.51,456.30 737.63,396.40 744.75,396.40 C751.88,396.40 759.00,402.40 766.12,402.40 C773.24,402.40 780.36,360.25 787.49,356.20 C794.61,352.15 801.73,352.02 808.85,349.20 C815.97,346.38 823.09,338.50 830.22,338.50 C837.34,338.50 844.46,339.70 851.58,341.50 C858.70,343.30 865.82,359.15 872.95,368.80 C880.07,378.45 887.19,399.60 894.31,399.60 C901.43,399.60 908.55,386.68 915.67,382.90 C922.80,379.12 929.92,377.95 937.04,374.30 C944.16,370.65 951.28,359.20 958.40,359.20 C965.53,359.20 972.65,377.70 979.77,377.70 C986.89,377.70 994.01,349.20 1001.13,349.20 C1008.26,349.20 1015.38,357.60 1022.50,361.80 L1022.50,470.2 L595.20,470.2 Z" fill="url(#freal)"/>
<line x1="595.2" y1="331.6" x2="1022.5" y2="331.6" stroke="#ffffff" stroke-opacity="0.08"/>
<line x1="595.2" y1="346.9" x2="1022.5" y2="346.9" stroke="#ffffff" stroke-opacity="0.08"/>
<line x1="595.2" y1="362.2" x2="1022.5" y2="362.2" stroke="#ffffff" stroke-opacity="0.08"/>
<line x1="595.2" y1="377.5" x2="1022.5" y2="377.5" stroke="#ffffff" stroke-opacity="0.08"/>
<line x1="595.2" y1="392.8" x2="1022.5" y2="392.8" stroke="#ffffff" stroke-opacity="0.08"/>
<line x1="595.2" y1="408.1" x2="1022.5" y2="408.1" stroke="#ffffff" stroke-opacity="0.08"/>
<line x1="595.2" y1="423.4" x2="1022.5" y2="423.4" stroke="#ffffff" stroke-opacity="0.08"/>
<line x1="595.2" y1="438.7" x2="1022.5" y2="438.7" stroke="#ffffff" stroke-opacity="0.08"/>
<line x1="595.2" y1="454.0" x2="1022.5" y2="454.0" stroke="#ffffff" stroke-opacity="0.08"/>
<line x1="595.2" y1="469.3" x2="1022.5" y2="469.3" stroke="#ffffff" stroke-opacity="0.08"/>
<line x1="637.6" y1="324.5" x2="637.6" y2="470.2" stroke="#ffffff" stroke-opacity="0.05"/>
<line x1="723.1" y1="324.5" x2="723.1" y2="470.2" stroke="#ffffff" stroke-opacity="0.05"/>
<line x1="808.6" y1="324.5" x2="808.6" y2="470.2" stroke="#ffffff" stroke-opacity="0.05"/>
<line x1="894.0" y1="324.5" x2="894.0" y2="470.2" stroke="#ffffff" stroke-opacity="0.05"/>
<line x1="979.5" y1="324.5" x2="979.5" y2="470.2" stroke="#ffffff" stroke-opacity="0.05"/>
<path d="M595.20,410.50 C602.32,414.30 609.44,421.90 616.57,421.90 C623.69,421.90 630.81,384.70 637.93,384.70 C645.05,384.70 652.17,415.10 659.30,415.10 C666.42,415.10 673.54,393.80 680.66,393.80 C687.78,393.80 694.90,404.81 702.03,413.90 C709.15,422.99 716.27,456.30 723.39,456.30 C730.51,456.30 737.63,396.40 744.75,396.40 C751.88,396.40 759.00,402.40 766.12,402.40 C773.24,402.40 780.36,360.25 787.49,356.20 C794.61,352.15 801.73,352.02 808.85,349.20 C815.97,346.38 823.09,338.50 830.22,338.50 C837.34,338.50 844.46,339.70 851.58,341.50 C858.70,343.30 865.82,359.15 872.95,368.80 C880.07,378.45 887.19,399.60 894.31,399.60 C901.43,399.60 908.55,386.68 915.67,382.90 C922.80,379.12 929.92,377.95 937.04,374.30 C944.16,370.65 951.28,359.20 958.40,359.20 C965.53,359.20 972.65,377.70 979.77,377.70 C986.89,377.70 994.01,349.20 1001.13,349.20 C1008.26,349.20 1015.38,357.60 1022.50,361.80" fill="none" stroke="url(#lreal)" stroke-width="1.8"/>
<circle cx="616.6" cy="422.9" r="2.6" fill="url(#lreal)"/>
<circle cx="637.9" cy="385.7" r="2.6" fill="url(#lreal)"/>
<circle cx="659.3" cy="416.1" r="2.6" fill="url(#lreal)"/>
<circle cx="680.7" cy="394.8" r="2.6" fill="url(#lreal)"/>
<circle cx="702.0" cy="414.9" r="2.6" fill="url(#lreal)"/>
<circle cx="723.4" cy="457.3" r="2.6" fill="url(#lreal)"/>
<circle cx="744.8" cy="397.4" r="2.6" fill="url(#lreal)"/>
<circle cx="766.1" cy="403.4" r="2.6" fill="url(#lreal)"/>
<circle cx="787.5" cy="357.2" r="2.6" fill="url(#lreal)"/>
<circle cx="808.9" cy="350.2" r="2.6" fill="url(#lreal)"/>
<circle cx="830.2" cy="339.5" r="2.6" fill="url(#lreal)"/>
<circle cx="851.6" cy="342.5" r="2.6" fill="url(#lreal)"/>
<circle cx="872.9" cy="369.8" r="2.6" fill="url(#lreal)"/>
<circle cx="894.3" cy="400.6" r="2.6" fill="url(#lreal)"/>
<circle cx="915.7" cy="383.9" r="2.6" fill="url(#lreal)"/>
<circle cx="937.0" cy="375.3" r="2.6" fill="url(#lreal)"/>
<circle cx="958.4" cy="360.2" r="2.6" fill="url(#lreal)"/>
<circle cx="979.8" cy="378.7" r="2.6" fill="url(#lreal)"/>
<circle cx="1001.1" cy="350.2" r="2.6" fill="url(#lreal)"/>
<circle cx="1022.5" cy="362.8" r="2.6" fill="url(#lreal)"/>
<text x="637.1" y="488.2" font-size="12" fill="#c4c4cf" stroke="#c4c4cf" stroke-width="0.2" text-anchor="middle">18:47:00</text>
<text x="722.6" y="488.2" font-size="12" fill="#c4c4cf" stroke="#c4c4cf" stroke-width="0.2" text-anchor="middle">18:48:00</text>
<text x="808.1" y="488.2" font-size="12" fill="#c4c4cf" stroke="#c4c4cf" stroke-width="0.2" text-anchor="middle">18:49:00</text>
<text x="893.5" y="488.2" font-size="12" fill="#c4c4cf" stroke="#c4c4cf" stroke-width="0.2" text-anchor="middle">18:50:00</text>
<text x="979.0" y="488.2" font-size="12" fill="#c4c4cf" stroke="#c4c4cf" stroke-width="0.2" text-anchor="middle">18:51:00</text>
<rect x="539" y="506" width="14" height="4" rx="2" fill="#6e9ff5"/>
<text x="568.5" y="512" font-size="13" fill="#ccccdc" stroke="#ccccdc" stroke-width="0.15" textLength="92.9" lengthAdjust="spacingAndGlyphs">Last *: 130 Mb/s</text>
<text x="668.9" y="512" font-size="13" fill="#ccccdc" stroke="#ccccdc" stroke-width="0.15" textLength="83.5" lengthAdjust="spacingAndGlyphs">Max: 138 Mb/s</text>
<rect x="1048.5" y="277.5" width="513" height="252" rx="6" fill="#181b1f" stroke="#2c2f35"/>
<text x="1057.3" y="299.9" font-size="15" fill="#ccccdc" stroke="#ccccdc" stroke-width="0.35">FNA</text>
<line x1="1118" y1="325.4" x2="1545" y2="325.4" stroke="#2a2d32"/>
<text x="1114.7" y="330.0" font-size="12" fill="#c4c4cf" stroke="#c4c4cf" stroke-width="0.2" text-anchor="end" textLength="53.8" lengthAdjust="spacingAndGlyphs">200 Mb/s</text>
<line x1="1118" y1="340.0" x2="1545" y2="340.0" stroke="#2a2d32"/>
<text x="1114.7" y="344.6" font-size="12" fill="#c4c4cf" stroke="#c4c4cf" stroke-width="0.2" text-anchor="end" textLength="51.4" lengthAdjust="spacingAndGlyphs">195 Mb/s</text>
<line x1="1118" y1="354.7" x2="1545" y2="354.7" stroke="#2a2d32"/>
<text x="1114.7" y="359.3" font-size="12" fill="#c4c4cf" stroke="#c4c4cf" stroke-width="0.2" text-anchor="end" textLength="51.4" lengthAdjust="spacingAndGlyphs">190 Mb/s</text>
<line x1="1118" y1="369.3" x2="1545" y2="369.3" stroke="#2a2d32"/>
<text x="1114.7" y="373.9" font-size="12" fill="#c4c4cf" stroke="#c4c4cf" stroke-width="0.2" text-anchor="end" textLength="51.4" lengthAdjust="spacingAndGlyphs">185 Mb/s</text>
<line x1="1118" y1="384.0" x2="1545" y2="384.0" stroke="#2a2d32"/>
<text x="1114.7" y="388.6" font-size="12" fill="#c4c4cf" stroke="#c4c4cf" stroke-width="0.2" text-anchor="end" textLength="51.4" lengthAdjust="spacingAndGlyphs">180 Mb/s</text>
<line x1="1118" y1="398.6" x2="1545" y2="398.6" stroke="#2a2d32"/>
<text x="1114.7" y="403.2" font-size="12" fill="#c4c4cf" stroke="#c4c4cf" stroke-width="0.2" text-anchor="end" textLength="51.4" lengthAdjust="spacingAndGlyphs">175 Mb/s</text>
<line x1="1118" y1="413.2" x2="1545" y2="413.2" stroke="#2a2d32"/>
<text x="1114.7" y="417.8" font-size="12" fill="#c4c4cf" stroke="#c4c4cf" stroke-width="0.2" text-anchor="end" textLength="51.4" lengthAdjust="spacingAndGlyphs">170 Mb/s</text>
<line x1="1118" y1="427.9" x2="1545" y2="427.9" stroke="#2a2d32"/>
<text x="1114.7" y="432.5" font-size="12" fill="#c4c4cf" stroke="#c4c4cf" stroke-width="0.2" text-anchor="end" textLength="51.4" lengthAdjust="spacingAndGlyphs">165 Mb/s</text>
<line x1="1118" y1="442.5" x2="1545" y2="442.5" stroke="#2a2d32"/>
<text x="1114.7" y="447.1" font-size="12" fill="#c4c4cf" stroke="#c4c4cf" stroke-width="0.2" text-anchor="end" textLength="51.4" lengthAdjust="spacingAndGlyphs">160 Mb/s</text>
<line x1="1118" y1="457.2" x2="1545" y2="457.2" stroke="#2a2d32"/>
<text x="1114.7" y="461.8" font-size="12" fill="#c4c4cf" stroke="#c4c4cf" stroke-width="0.2" text-anchor="end" textLength="51.4" lengthAdjust="spacingAndGlyphs">155 Mb/s</text>
<line x1="1160.3" y1="324.5" x2="1160.3" y2="470.2" stroke="#2a2d32"/>
<line x1="1245.5" y1="324.5" x2="1245.5" y2="470.2" stroke="#2a2d32"/>
<line x1="1330.7" y1="324.5" x2="1330.7" y2="470.2" stroke="#2a2d32"/>
<line x1="1415.9" y1="324.5" x2="1415.9" y2="470.2" stroke="#2a2d32"/>
<line x1="1501.1" y1="324.5" x2="1501.1" y2="470.2" stroke="#2a2d32"/>
<path d="M1118.00,339.10 C1125.10,344.33 1132.20,351.15 1139.30,354.80 C1146.40,358.45 1153.50,363.20 1160.60,363.20 C1167.70,363.20 1174.80,358.61 1181.90,355.60 C1189.00,352.59 1196.10,344.50 1203.20,344.50 C1210.30,344.50 1217.40,355.60 1224.50,355.60 C1231.60,355.60 1238.70,338.70 1245.80,338.70 C1252.90,338.70 1260.00,340.26 1267.10,341.60 C1274.20,342.94 1281.30,348.10 1288.40,348.10 C1295.50,348.10 1302.60,342.70 1309.70,342.70 C1316.80,342.70 1323.90,344.69 1331.00,347.50 C1338.10,350.31 1345.20,381.90 1352.30,381.90 C1359.40,381.90 1366.50,375.90 1373.60,375.90 C1380.70,375.90 1387.80,382.90 1394.90,382.90 C1402.00,382.90 1409.10,348.70 1416.20,348.70 C1423.30,348.70 1430.40,369.36 1437.50,376.90 C1444.60,384.44 1451.70,395.80 1458.80,395.80 C1465.90,395.80 1473.00,386.30 1480.10,386.30 C1487.20,386.30 1494.30,398.94 1501.40,408.40 C1508.50,417.86 1515.60,442.98 1522.70,448.00 C1529.80,453.02 1536.90,454.20 1544.00,457.30 L1544.00,470.2 L1118.00,470.2 Z" fill="url(#ffna)"/>
<line x1="1118" y1="325.4" x2="1544" y2="325.4" stroke="#ffffff" stroke-opacity="0.08"/>
<line x1="1118" y1="340.0" x2="1544" y2="340.0" stroke="#ffffff" stroke-opacity="0.08"/>
<line x1="1118" y1="354.7" x2="1544" y2="354.7" stroke="#ffffff" stroke-opacity="0.08"/>
<line x1="1118" y1="369.3" x2="1544" y2="369.3" stroke="#ffffff" stroke-opacity="0.08"/>
<line x1="1118" y1="384.0" x2="1544" y2="384.0" stroke="#ffffff" stroke-opacity="0.08"/>
<line x1="1118" y1="398.6" x2="1544" y2="398.6" stroke="#ffffff" stroke-opacity="0.08"/>
<line x1="1118" y1="413.2" x2="1544" y2="413.2" stroke="#ffffff" stroke-opacity="0.08"/>
<line x1="1118" y1="427.9" x2="1544" y2="427.9" stroke="#ffffff" stroke-opacity="0.08"/>
<line x1="1118" y1="442.5" x2="1544" y2="442.5" stroke="#ffffff" stroke-opacity="0.08"/>
<line x1="1118" y1="457.2" x2="1544" y2="457.2" stroke="#ffffff" stroke-opacity="0.08"/>
<line x1="1160.3" y1="324.5" x2="1160.3" y2="470.2" stroke="#ffffff" stroke-opacity="0.05"/>
<line x1="1245.5" y1="324.5" x2="1245.5" y2="470.2" stroke="#ffffff" stroke-opacity="0.05"/>
<line x1="1330.7" y1="324.5" x2="1330.7" y2="470.2" stroke="#ffffff" stroke-opacity="0.05"/>
<line x1="1415.9" y1="324.5" x2="1415.9" y2="470.2" stroke="#ffffff" stroke-opacity="0.05"/>
<line x1="1501.1" y1="324.5" x2="1501.1" y2="470.2" stroke="#ffffff" stroke-opacity="0.05"/>
<path d="M1118.00,339.10 C1125.10,344.33 1132.20,351.15 1139.30,354.80 C1146.40,358.45 1153.50,363.20 1160.60,363.20 C1167.70,363.20 1174.80,358.61 1181.90,355.60 C1189.00,352.59 1196.10,344.50 1203.20,344.50 C1210.30,344.50 1217.40,355.60 1224.50,355.60 C1231.60,355.60 1238.70,338.70 1245.80,338.70 C1252.90,338.70 1260.00,340.26 1267.10,341.60 C1274.20,342.94 1281.30,348.10 1288.40,348.10 C1295.50,348.10 1302.60,342.70 1309.70,342.70 C1316.80,342.70 1323.90,344.69 1331.00,347.50 C1338.10,350.31 1345.20,381.90 1352.30,381.90 C1359.40,381.90 1366.50,375.90 1373.60,375.90 C1380.70,375.90 1387.80,382.90 1394.90,382.90 C1402.00,382.90 1409.10,348.70 1416.20,348.70 C1423.30,348.70 1430.40,369.36 1437.50,376.90 C1444.60,384.44 1451.70,395.80 1458.80,395.80 C1465.90,395.80 1473.00,386.30 1480.10,386.30 C1487.20,386.30 1494.30,398.94 1501.40,408.40 C1508.50,417.86 1515.60,442.98 1522.70,448.00 C1529.80,453.02 1536.90,454.20 1544.00,457.30" fill="none" stroke="url(#lfna)" stroke-width="1.8"/>
<circle cx="1139.3" cy="355.8" r="2.6" fill="url(#lfna)"/>
<circle cx="1160.6" cy="364.2" r="2.6" fill="url(#lfna)"/>
<circle cx="1181.9" cy="356.6" r="2.6" fill="url(#lfna)"/>
<circle cx="1203.2" cy="345.5" r="2.6" fill="url(#lfna)"/>
<circle cx="1224.5" cy="356.6" r="2.6" fill="url(#lfna)"/>
<circle cx="1245.8" cy="339.7" r="2.6" fill="url(#lfna)"/>
<circle cx="1267.1" cy="342.6" r="2.6" fill="url(#lfna)"/>
<circle cx="1288.4" cy="349.1" r="2.6" fill="url(#lfna)"/>
<circle cx="1309.7" cy="343.7" r="2.6" fill="url(#lfna)"/>
<circle cx="1331.0" cy="348.5" r="2.6" fill="url(#lfna)"/>
<circle cx="1352.3" cy="382.9" r="2.6" fill="url(#lfna)"/>
<circle cx="1373.6" cy="376.9" r="2.6" fill="url(#lfna)"/>
<circle cx="1394.9" cy="383.9" r="2.6" fill="url(#lfna)"/>
<circle cx="1416.2" cy="349.7" r="2.6" fill="url(#lfna)"/>
<circle cx="1437.5" cy="377.9" r="2.6" fill="url(#lfna)"/>
<circle cx="1458.8" cy="396.8" r="2.6" fill="url(#lfna)"/>
<circle cx="1480.1" cy="387.3" r="2.6" fill="url(#lfna)"/>
<circle cx="1501.4" cy="409.4" r="2.6" fill="url(#lfna)"/>
<circle cx="1522.7" cy="449.0" r="2.6" fill="url(#lfna)"/>
<circle cx="1544.0" cy="458.3" r="2.6" fill="url(#lfna)"/>
<text x="1159.8" y="488.2" font-size="12" fill="#c4c4cf" stroke="#c4c4cf" stroke-width="0.2" text-anchor="middle">18:47:00</text>
<text x="1245.0" y="488.2" font-size="12" fill="#c4c4cf" stroke="#c4c4cf" stroke-width="0.2" text-anchor="middle">18:48:00</text>
<text x="1330.2" y="488.2" font-size="12" fill="#c4c4cf" stroke="#c4c4cf" stroke-width="0.2" text-anchor="middle">18:49:00</text>
<text x="1415.4" y="488.2" font-size="12" fill="#c4c4cf" stroke="#c4c4cf" stroke-width="0.2" text-anchor="middle">18:50:00</text>
<text x="1500.6" y="488.2" font-size="12" fill="#c4c4cf" stroke="#c4c4cf" stroke-width="0.2" text-anchor="middle">18:51:00</text>
<rect x="1060.3" y="506" width="13.799999999999955" height="4" rx="2" fill="#a535b8"/>
<text x="1081.8" y="512" font-size="13" fill="#ccccdc" stroke="#ccccdc" stroke-width="0.15" textLength="24.7" lengthAdjust="spacingAndGlyphs">FNA</text>
<text x="1113.8" y="512" font-size="13" fill="#ccccdc" stroke="#ccccdc" stroke-width="0.15" textLength="92.6" lengthAdjust="spacingAndGlyphs">Last *: 155 Mb/s</text>
<text x="1214.3" y="512" font-size="13" fill="#ccccdc" stroke="#ccccdc" stroke-width="0.15" textLength="83.1" lengthAdjust="spacingAndGlyphs">Max: 195 Mb/s</text>
<rect x="5.5" y="538.5" width="513" height="252" rx="6" fill="#181b1f" stroke="#2c2f35"/>
<text x="14.6" y="560.9" font-size="15" fill="#ccccdc" stroke="#ccccdc" stroke-width="0.35">GGC</text>
<line x1="74" y1="593.0" x2="502.5" y2="593.0" stroke="#2a2d32"/>
<text x="70.10000000000001" y="597.6" font-size="12" fill="#c4c4cf" stroke="#c4c4cf" stroke-width="0.2" text-anchor="end" textLength="51.4" lengthAdjust="spacingAndGlyphs">180 Mb/s</text>
<line x1="74" y1="617.4" x2="502.5" y2="617.4" stroke="#2a2d32"/>
<text x="70.10000000000001" y="622.0" font-size="12" fill="#c4c4cf" stroke="#c4c4cf" stroke-width="0.2" text-anchor="end" textLength="51.4" lengthAdjust="spacingAndGlyphs">170 Mb/s</text>
<line x1="74" y1="641.9" x2="502.5" y2="641.9" stroke="#2a2d32"/>
<text x="70.10000000000001" y="646.5" font-size="12" fill="#c4c4cf" stroke="#c4c4cf" stroke-width="0.2" text-anchor="end" textLength="51.4" lengthAdjust="spacingAndGlyphs">160 Mb/s</text>
<line x1="74" y1="666.3" x2="502.5" y2="666.3" stroke="#2a2d32"/>
<text x="70.10000000000001" y="670.9" font-size="12" fill="#c4c4cf" stroke="#c4c4cf" stroke-width="0.2" text-anchor="end" textLength="51.4" lengthAdjust="spacingAndGlyphs">150 Mb/s</text>
<line x1="74" y1="690.7" x2="502.5" y2="690.7" stroke="#2a2d32"/>
<text x="70.10000000000001" y="695.3" font-size="12" fill="#c4c4cf" stroke="#c4c4cf" stroke-width="0.2" text-anchor="end" textLength="51.4" lengthAdjust="spacingAndGlyphs">140 Mb/s</text>
<line x1="74" y1="715.1" x2="502.5" y2="715.1" stroke="#2a2d32"/>
<text x="70.10000000000001" y="719.8" font-size="12" fill="#c4c4cf" stroke="#c4c4cf" stroke-width="0.2" text-anchor="end" textLength="51.4" lengthAdjust="spacingAndGlyphs">130 Mb/s</text>
<line x1="116.5" y1="585.5" x2="116.5" y2="731.2" stroke="#2a2d32"/>
<line x1="202.0" y1="585.5" x2="202.0" y2="731.2" stroke="#2a2d32"/>
<line x1="287.5" y1="585.5" x2="287.5" y2="731.2" stroke="#2a2d32"/>
<line x1="373.0" y1="585.5" x2="373.0" y2="731.2" stroke="#2a2d32"/>
<line x1="458.5" y1="585.5" x2="458.5" y2="731.2" stroke="#2a2d32"/>
<path d="M74.00,687.50 C81.12,681.17 88.25,673.76 95.38,668.50 C102.50,663.24 109.62,655.00 116.75,655.00 C123.88,655.00 131.00,655.00 138.12,655.00 C145.25,655.00 152.38,673.50 159.50,673.50 C166.62,673.50 173.75,663.64 180.88,654.00 C188.00,644.36 195.12,598.10 202.25,598.10 C209.38,598.10 216.50,627.20 223.62,627.20 C230.75,627.20 237.88,627.20 245.00,627.20 C252.12,627.20 259.25,645.38 266.38,653.00 C273.50,660.62 280.62,669.33 287.75,673.50 C294.88,677.67 302.00,679.19 309.12,682.50 C316.25,685.81 323.38,693.60 330.50,693.60 C337.62,693.60 344.75,692.17 351.88,690.20 C359.00,688.23 366.12,671.92 373.25,668.00 C380.38,664.08 387.50,660.59 394.62,660.00 C401.75,659.41 408.88,659.00 416.00,659.00 C423.12,659.00 430.25,693.60 437.38,693.60 C444.50,693.60 451.62,687.50 458.75,687.50 C465.88,687.50 473.00,699.22 480.12,704.00 C487.25,708.78 494.38,712.47 501.50,716.70 L501.50,731.2 L74.00,731.2 Z" fill="url(#fggc)"/>
<line x1="74" y1="593.0" x2="501.5" y2="593.0" stroke="#ffffff" stroke-opacity="0.08"/>
<line x1="74" y1="617.4" x2="501.5" y2="617.4" stroke="#ffffff" stroke-opacity="0.08"/>
<line x1="74" y1="641.9" x2="501.5" y2="641.9" stroke="#ffffff" stroke-opacity="0.08"/>
<line x1="74" y1="666.3" x2="501.5" y2="666.3" stroke="#ffffff" stroke-opacity="0.08"/>
<line x1="74" y1="690.7" x2="501.5" y2="690.7" stroke="#ffffff" stroke-opacity="0.08"/>
<line x1="74" y1="715.1" x2="501.5" y2="715.1" stroke="#ffffff" stroke-opacity="0.08"/>
<line x1="116.5" y1="585.5" x2="116.5" y2="731.2" stroke="#ffffff" stroke-opacity="0.05"/>
<line x1="202.0" y1="585.5" x2="202.0" y2="731.2" stroke="#ffffff" stroke-opacity="0.05"/>
<line x1="287.5" y1="585.5" x2="287.5" y2="731.2" stroke="#ffffff" stroke-opacity="0.05"/>
<line x1="373.0" y1="585.5" x2="373.0" y2="731.2" stroke="#ffffff" stroke-opacity="0.05"/>
<line x1="458.5" y1="585.5" x2="458.5" y2="731.2" stroke="#ffffff" stroke-opacity="0.05"/>
<path d="M74.00,687.50 C81.12,681.17 88.25,673.76 95.38,668.50 C102.50,663.24 109.62,655.00 116.75,655.00 C123.88,655.00 131.00,655.00 138.12,655.00 C145.25,655.00 152.38,673.50 159.50,673.50 C166.62,673.50 173.75,663.64 180.88,654.00 C188.00,644.36 195.12,598.10 202.25,598.10 C209.38,598.10 216.50,627.20 223.62,627.20 C230.75,627.20 237.88,627.20 245.00,627.20 C252.12,627.20 259.25,645.38 266.38,653.00 C273.50,660.62 280.62,669.33 287.75,673.50 C294.88,677.67 302.00,679.19 309.12,682.50 C316.25,685.81 323.38,693.60 330.50,693.60 C337.62,693.60 344.75,692.17 351.88,690.20 C359.00,688.23 366.12,671.92 373.25,668.00 C380.38,664.08 387.50,660.59 394.62,660.00 C401.75,659.41 408.88,659.00 416.00,659.00 C423.12,659.00 430.25,693.60 437.38,693.60 C444.50,693.60 451.62,687.50 458.75,687.50 C465.88,687.50 473.00,699.22 480.12,704.00 C487.25,708.78 494.38,712.47 501.50,716.70" fill="none" stroke="url(#lggc)" stroke-width="1.8"/>
<circle cx="95.4" cy="669.5" r="2.6" fill="url(#lggc)"/>
<circle cx="116.8" cy="656.0" r="2.6" fill="url(#lggc)"/>
<circle cx="138.1" cy="656.0" r="2.6" fill="url(#lggc)"/>
<circle cx="159.5" cy="674.5" r="2.6" fill="url(#lggc)"/>
<circle cx="180.9" cy="655.0" r="2.6" fill="url(#lggc)"/>
<circle cx="202.2" cy="599.1" r="2.6" fill="url(#lggc)"/>
<circle cx="223.6" cy="628.2" r="2.6" fill="url(#lggc)"/>
<circle cx="245.0" cy="628.2" r="2.6" fill="url(#lggc)"/>
<circle cx="266.4" cy="654.0" r="2.6" fill="url(#lggc)"/>
<circle cx="287.8" cy="674.5" r="2.6" fill="url(#lggc)"/>
<circle cx="309.1" cy="683.5" r="2.6" fill="url(#lggc)"/>
<circle cx="330.5" cy="694.6" r="2.6" fill="url(#lggc)"/>
<circle cx="351.9" cy="691.2" r="2.6" fill="url(#lggc)"/>
<circle cx="373.2" cy="669.0" r="2.6" fill="url(#lggc)"/>
<circle cx="394.6" cy="661.0" r="2.6" fill="url(#lggc)"/>
<circle cx="416.0" cy="660.0" r="2.6" fill="url(#lggc)"/>
<circle cx="437.4" cy="694.6" r="2.6" fill="url(#lggc)"/>
<circle cx="458.8" cy="688.5" r="2.6" fill="url(#lggc)"/>
<circle cx="480.1" cy="705.0" r="2.6" fill="url(#lggc)"/>
<circle cx="501.5" cy="717.7" r="2.6" fill="url(#lggc)"/>
<text x="116.0" y="749.2" font-size="12" fill="#c4c4cf" stroke="#c4c4cf" stroke-width="0.2" text-anchor="middle">18:47:00</text>
<text x="201.5" y="749.2" font-size="12" fill="#c4c4cf" stroke="#c4c4cf" stroke-width="0.2" text-anchor="middle">18:48:00</text>
<text x="287.0" y="749.2" font-size="12" fill="#c4c4cf" stroke="#c4c4cf" stroke-width="0.2" text-anchor="middle">18:49:00</text>
<text x="372.5" y="749.2" font-size="12" fill="#c4c4cf" stroke="#c4c4cf" stroke-width="0.2" text-anchor="middle">18:50:00</text>
<text x="458.0" y="749.2" font-size="12" fill="#c4c4cf" stroke="#c4c4cf" stroke-width="0.2" text-anchor="middle">18:51:00</text>
<rect x="18" y="767" width="13.600000000000001" height="4" rx="2" fill="#f2d84a"/>
<text x="39.0" y="773" font-size="13" fill="#ccccdc" stroke="#ccccdc" stroke-width="0.15" textLength="27.0" lengthAdjust="spacingAndGlyphs">GGC</text>
<text x="73.3" y="773" font-size="13" fill="#ccccdc" stroke="#ccccdc" stroke-width="0.15" textLength="93.1" lengthAdjust="spacingAndGlyphs">Last *: 129 Mb/s</text>
<text x="173.8" y="773" font-size="13" fill="#ccccdc" stroke="#ccccdc" stroke-width="0.15" textLength="82.3" lengthAdjust="spacingAndGlyphs">Max: 178 Mb/s</text>
<rect x="527.5" y="538.5" width="512" height="252" rx="6" fill="#181b1f" stroke="#2c2f35"/>
<text x="535.9" y="560.9" font-size="15" fill="#ccccdc" stroke="#ccccdc" stroke-width="0.35">Akamai</text>
<line x1="595.2" y1="600.5" x2="1023.5" y2="600.5" stroke="#2a2d32"/>
<text x="591.1999999999999" y="605.1" font-size="12" fill="#c4c4cf" stroke="#c4c4cf" stroke-width="0.2" text-anchor="end" textLength="49.0" lengthAdjust="spacingAndGlyphs">115 Mb/s</text>
<line x1="595.2" y1="619.0" x2="1023.5" y2="619.0" stroke="#2a2d32"/>
<text x="591.1999999999999" y="623.6" font-size="12" fill="#c4c4cf" stroke="#c4c4cf" stroke-width="0.2" text-anchor="end" textLength="49.0" lengthAdjust="spacingAndGlyphs">110 Mb/s</text>
<line x1="595.2" y1="637.4" x2="1023.5" y2="637.4" stroke="#2a2d32"/>
<text x="591.1999999999999" y="642.0" font-size="12" fill="#c4c4cf" stroke="#c4c4cf" stroke-width="0.2" text-anchor="end" textLength="51.4" lengthAdjust="spacingAndGlyphs">105 Mb/s</text>
<line x1="595.2" y1="655.9" x2="1023.5" y2="655.9" stroke="#2a2d32"/>
<text x="591.1999999999999" y="660.5" font-size="12" fill="#c4c4cf" stroke="#c4c4cf" stroke-width="0.2" text-anchor="end" textLength="51.4" lengthAdjust="spacingAndGlyphs">100 Mb/s</text>
<line x1="595.2" y1="674.3" x2="1023.5" y2="674.3" stroke="#2a2d32"/>
<text x="591.1999999999999" y="678.9" font-size="12" fill="#c4c4cf" stroke="#c4c4cf" stroke-width="0.2" text-anchor="end" textLength="46.6" lengthAdjust="spacingAndGlyphs">95 Mb/s</text>
<line x1="595.2" y1="692.8" x2="1023.5" y2="692.8" stroke="#2a2d32"/>
<text x="591.1999999999999" y="697.4" font-size="12" fill="#c4c4cf" stroke="#c4c4cf" stroke-width="0.2" text-anchor="end" textLength="46.6" lengthAdjust="spacingAndGlyphs">90 Mb/s</text>
<line x1="595.2" y1="711.3" x2="1023.5" y2="711.3" stroke="#2a2d32"/>
<text x="591.1999999999999" y="715.9" font-size="12" fill="#c4c4cf" stroke="#c4c4cf" stroke-width="0.2" text-anchor="end" textLength="46.6" lengthAdjust="spacingAndGlyphs">85 Mb/s</text>
<line x1="595.2" y1="729.7" x2="1023.5" y2="729.7" stroke="#2a2d32"/>
<text x="591.1999999999999" y="734.3" font-size="12" fill="#c4c4cf" stroke="#c4c4cf" stroke-width="0.2" text-anchor="end" textLength="46.6" lengthAdjust="spacingAndGlyphs">80 Mb/s</text>
<line x1="637.6" y1="585.5" x2="637.6" y2="731.2" stroke="#2a2d32"/>
<line x1="723.1" y1="585.5" x2="723.1" y2="731.2" stroke="#2a2d32"/>
<line x1="808.6" y1="585.5" x2="808.6" y2="731.2" stroke="#2a2d32"/>
<line x1="894.0" y1="585.5" x2="894.0" y2="731.2" stroke="#2a2d32"/>
<line x1="979.5" y1="585.5" x2="979.5" y2="731.2" stroke="#2a2d32"/>
<path d="M595.20,649.00 C602.32,650.67 609.44,652.13 616.57,654.00 C623.69,655.87 630.81,656.97 637.93,660.40 C645.05,663.83 652.17,677.25 659.30,686.50 C666.42,695.75 673.54,716.10 680.66,716.10 C687.78,716.10 694.90,638.30 702.03,638.30 C709.15,638.30 716.27,642.90 723.39,642.90 C730.51,642.90 737.63,628.20 744.75,628.20 C751.88,628.20 759.00,641.06 766.12,646.90 C773.24,652.74 780.36,661.25 787.49,663.40 C794.61,665.55 801.73,667.40 808.85,667.40 C815.97,667.40 823.09,661.40 830.22,661.40 C837.34,661.40 844.46,664.47 851.58,668.40 C858.70,672.33 865.82,705.60 872.95,705.60 C880.07,705.60 887.19,702.25 894.31,699.20 C901.43,696.15 908.55,687.11 915.67,683.10 C922.80,679.09 929.92,674.86 937.04,673.50 C944.16,672.14 951.28,672.56 958.40,670.90 C965.53,669.24 972.65,621.98 979.77,613.60 C986.89,605.22 994.01,597.50 1001.13,597.50 C1008.26,597.50 1015.38,600.57 1022.50,602.10 L1022.50,731.2 L595.20,731.2 Z" fill="url(#fak)"/>
<line x1="595.2" y1="600.5" x2="1022.5" y2="600.5" stroke="#ffffff" stroke-opacity="0.08"/>
<line x1="595.2" y1="619.0" x2="1022.5" y2="619.0" stroke="#ffffff" stroke-opacity="0.08"/>
<line x1="595.2" y1="637.4" x2="1022.5" y2="637.4" stroke="#ffffff" stroke-opacity="0.08"/>
<line x1="595.2" y1="655.9" x2="1022.5" y2="655.9" stroke="#ffffff" stroke-opacity="0.08"/>
<line x1="595.2" y1="674.3" x2="1022.5" y2="674.3" stroke="#ffffff" stroke-opacity="0.08"/>
<line x1="595.2" y1="692.8" x2="1022.5" y2="692.8" stroke="#ffffff" stroke-opacity="0.08"/>
<line x1="595.2" y1="711.3" x2="1022.5" y2="711.3" stroke="#ffffff" stroke-opacity="0.08"/>
<line x1="595.2" y1="729.7" x2="1022.5" y2="729.7" stroke="#ffffff" stroke-opacity="0.08"/>
<line x1="637.6" y1="585.5" x2="637.6" y2="731.2" stroke="#ffffff" stroke-opacity="0.05"/>
<line x1="723.1" y1="585.5" x2="723.1" y2="731.2" stroke="#ffffff" stroke-opacity="0.05"/>
<line x1="808.6" y1="585.5" x2="808.6" y2="731.2" stroke="#ffffff" stroke-opacity="0.05"/>
<line x1="894.0" y1="585.5" x2="894.0" y2="731.2" stroke="#ffffff" stroke-opacity="0.05"/>
<line x1="979.5" y1="585.5" x2="979.5" y2="731.2" stroke="#ffffff" stroke-opacity="0.05"/>
<path d="M595.20,649.00 C602.32,650.67 609.44,652.13 616.57,654.00 C623.69,655.87 630.81,656.97 637.93,660.40 C645.05,663.83 652.17,677.25 659.30,686.50 C666.42,695.75 673.54,716.10 680.66,716.10 C687.78,716.10 694.90,638.30 702.03,638.30 C709.15,638.30 716.27,642.90 723.39,642.90 C730.51,642.90 737.63,628.20 744.75,628.20 C751.88,628.20 759.00,641.06 766.12,646.90 C773.24,652.74 780.36,661.25 787.49,663.40 C794.61,665.55 801.73,667.40 808.85,667.40 C815.97,667.40 823.09,661.40 830.22,661.40 C837.34,661.40 844.46,664.47 851.58,668.40 C858.70,672.33 865.82,705.60 872.95,705.60 C880.07,705.60 887.19,702.25 894.31,699.20 C901.43,696.15 908.55,687.11 915.67,683.10 C922.80,679.09 929.92,674.86 937.04,673.50 C944.16,672.14 951.28,672.56 958.40,670.90 C965.53,669.24 972.65,621.98 979.77,613.60 C986.89,605.22 994.01,597.50 1001.13,597.50 C1008.26,597.50 1015.38,600.57 1022.50,602.10" fill="none" stroke="url(#lak)" stroke-width="1.8"/>
<circle cx="616.6" cy="655.0" r="2.6" fill="url(#lak)"/>
<circle cx="637.9" cy="661.4" r="2.6" fill="url(#lak)"/>
<circle cx="659.3" cy="687.5" r="2.6" fill="url(#lak)"/>
<circle cx="680.7" cy="717.1" r="2.6" fill="url(#lak)"/>
<circle cx="702.0" cy="639.3" r="2.6" fill="url(#lak)"/>
<circle cx="723.4" cy="643.9" r="2.6" fill="url(#lak)"/>
<circle cx="744.8" cy="629.2" r="2.6" fill="url(#lak)"/>
<circle cx="766.1" cy="647.9" r="2.6" fill="url(#lak)"/>
<circle cx="787.5" cy="664.4" r="2.6" fill="url(#lak)"/>
<circle cx="808.9" cy="668.4" r="2.6" fill="url(#lak)"/>
<circle cx="830.2" cy="662.4" r="2.6" fill="url(#lak)"/>
<circle cx="851.6" cy="669.4" r="2.6" fill="url(#lak)"/>
<circle cx="872.9" cy="706.6" r="2.6" fill="url(#lak)"/>
<circle cx="894.3" cy="700.2" r="2.6" fill="url(#lak)"/>
<circle cx="915.7" cy="684.1" r="2.6" fill="url(#lak)"/>
<circle cx="937.0" cy="674.5" r="2.6" fill="url(#lak)"/>
<circle cx="958.4" cy="671.9" r="2.6" fill="url(#lak)"/>
<circle cx="979.8" cy="614.6" r="2.6" fill="url(#lak)"/>
<circle cx="1001.1" cy="598.5" r="2.6" fill="url(#lak)"/>
<circle cx="1022.5" cy="603.1" r="2.6" fill="url(#lak)"/>
<text x="637.1" y="749.2" font-size="12" fill="#c4c4cf" stroke="#c4c4cf" stroke-width="0.2" text-anchor="middle">18:47:00</text>
<text x="722.6" y="749.2" font-size="12" fill="#c4c4cf" stroke="#c4c4cf" stroke-width="0.2" text-anchor="middle">18:48:00</text>
<text x="808.1" y="749.2" font-size="12" fill="#c4c4cf" stroke="#c4c4cf" stroke-width="0.2" text-anchor="middle">18:49:00</text>
<text x="893.5" y="749.2" font-size="12" fill="#c4c4cf" stroke="#c4c4cf" stroke-width="0.2" text-anchor="middle">18:50:00</text>
<text x="979.0" y="749.2" font-size="12" fill="#c4c4cf" stroke="#c4c4cf" stroke-width="0.2" text-anchor="middle">18:51:00</text>
<rect x="539.3" y="767" width="13.600000000000023" height="4" rx="2" fill="#6e9ff5"/>
<text x="560.7" y="773" font-size="13" fill="#ccccdc" stroke="#ccccdc" stroke-width="0.15" textLength="46.9" lengthAdjust="spacingAndGlyphs">AKAMAI</text>
<text x="615.2" y="773" font-size="13" fill="#ccccdc" stroke="#ccccdc" stroke-width="0.15" textLength="90.4" lengthAdjust="spacingAndGlyphs">Last *: 114 Mb/s</text>
<text x="713.6" y="773" font-size="13" fill="#ccccdc" stroke="#ccccdc" stroke-width="0.15" textLength="80.5" lengthAdjust="spacingAndGlyphs">Max: 116 Mb/s</text>
</svg>
</body></html>
